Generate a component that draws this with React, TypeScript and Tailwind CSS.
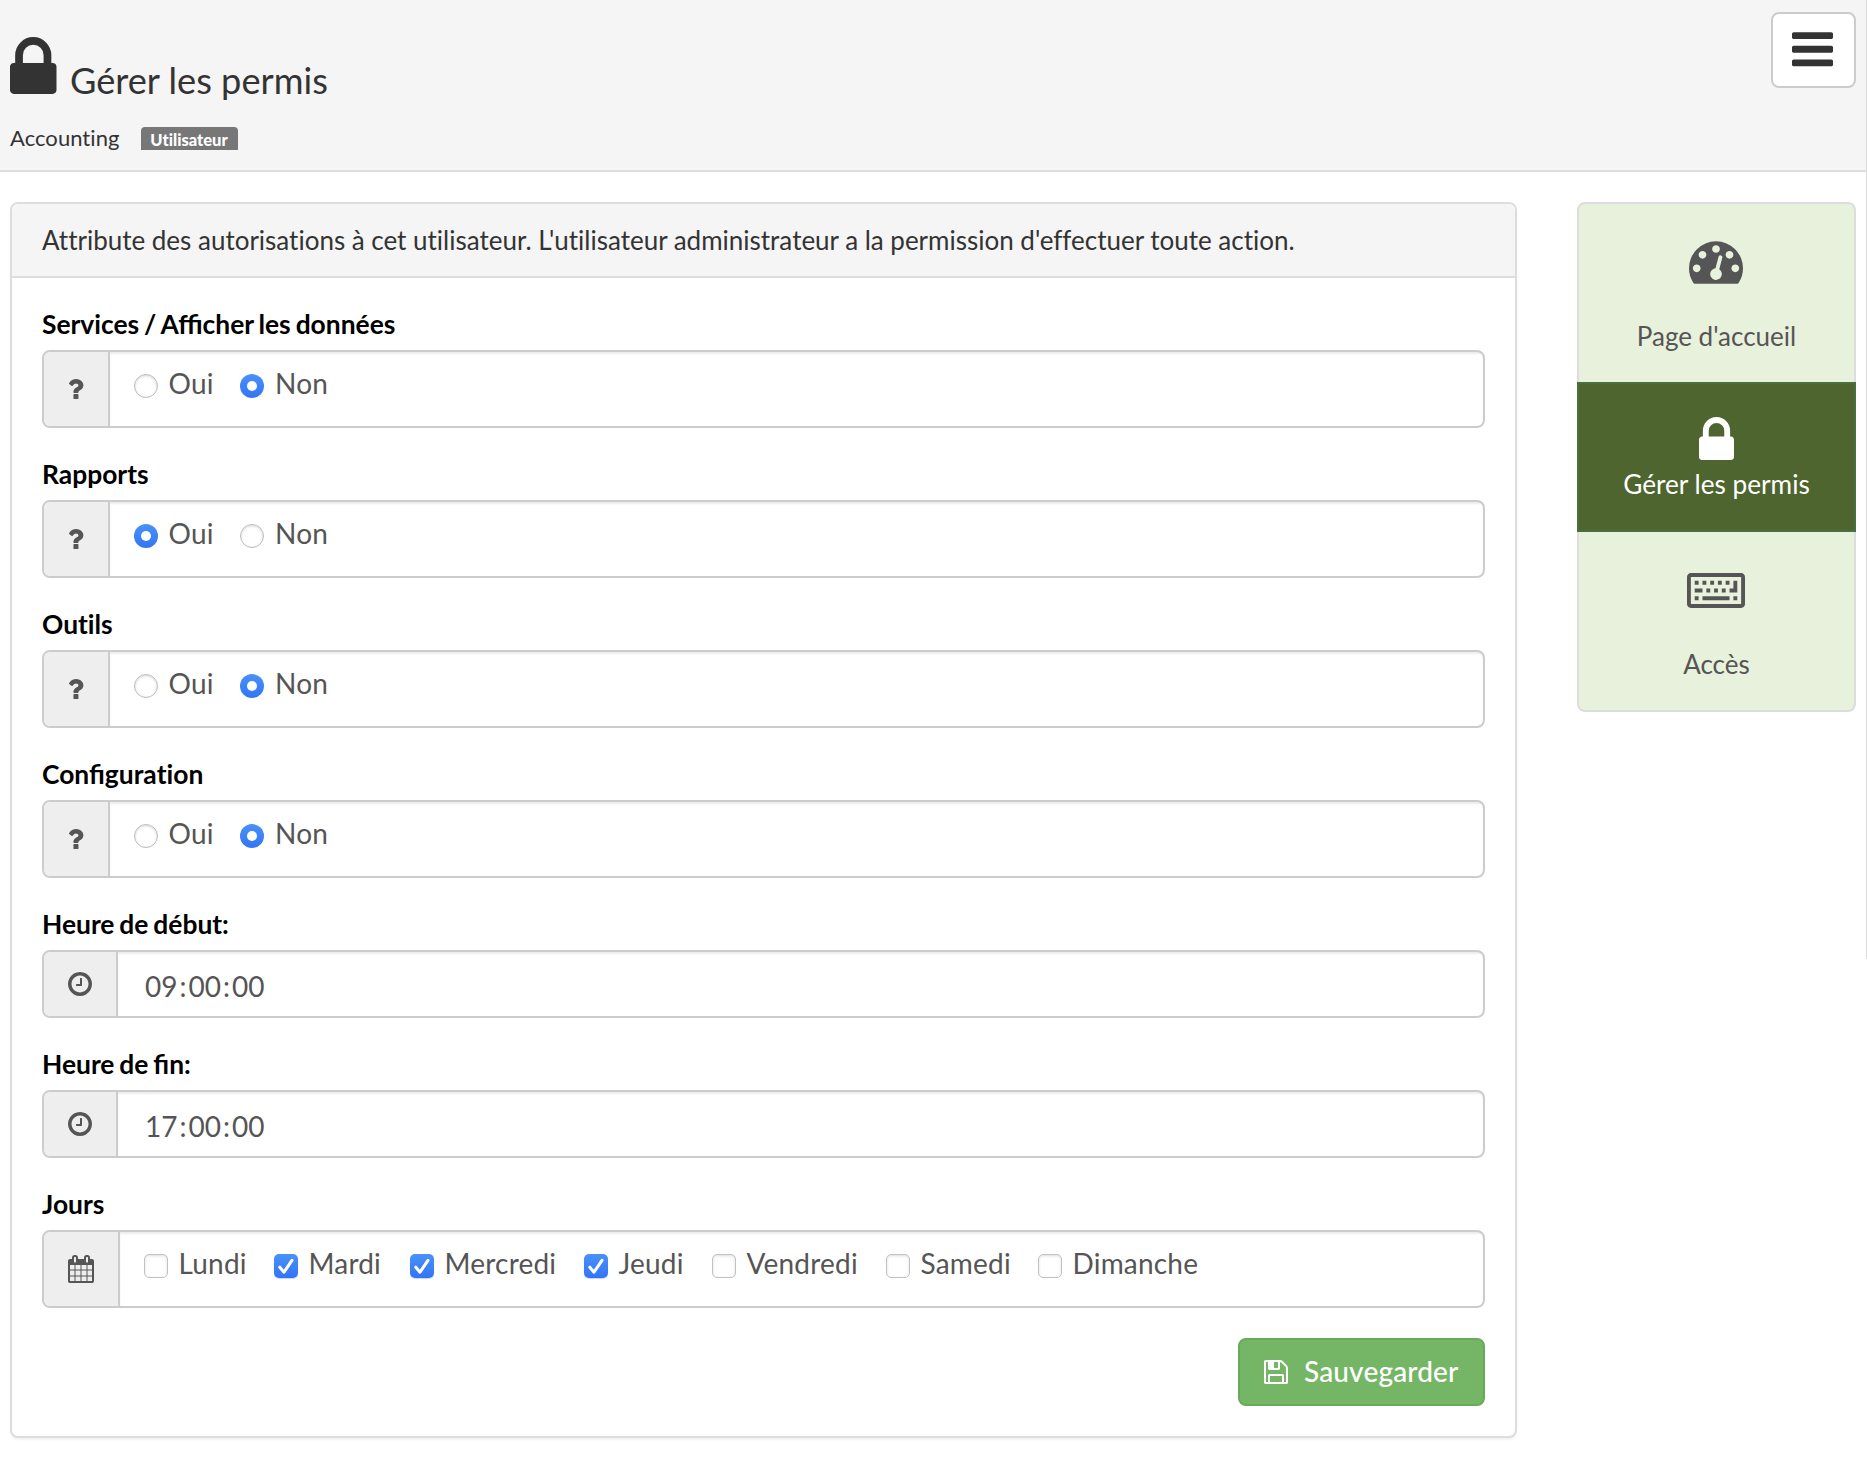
import type { ReactNode } from "react";

const LOCK =
  "M640 768h512v-192q0-106-75-181t-181-75-181 75-75 181v192zm832 96v576q0 40-28 68t-68 28h-960q-40 0-68-28t-28-68v-576q0-40 28-68t68-28h32v-192q0-184 132-316t316-132 316 132 132 316v192h32q40 0 68 28t28 68z";
const BARS =
  "M1664 1344v128q0 26-19 45t-45 19h-1408q-26 0-45-19t-19-45v-128q0-26 19-45t45-19h1408q26 0 45 19t19 45zm0-512v128q0 26-19 45t-45 19h-1408q-26 0-45-19t-19-45v-128q0-26 19-45t45-19h1408q26 0 45 19t19 45zm0-512v128q0 26-19 45t-45 19h-1408q-26 0-45-19t-19-45v-128q0-26 19-45t45-19h1408q26 0 45 19t19 45z";
const QUESTION =
  "M1088 1256v240q0 16-12 28t-28 12h-240q-16 0-28-12t-12-28v-240q0-16 12-28t28-12h240q16 0 28 12t12 28zm316-600q0 54-15.5 101t-35 76.5-55 59.5-57.5 43.5-61 35.5q-41 23-68.5 65t-27.5 67q0 17-12 32.5t-28 15.5h-240q-15 0-25.5-18.5t-10.5-37.5v-45q0-83 65-156.5t143-108.5q59-27 84-56t25-76q0-42-46.5-74t-107.5-32q-65 0-108 29-35 25-107 115-13 16-31 16-12 0-25-8l-164-125q-13-10-15.5-25t5.5-28q160-266 464-266 80 0 161 31t146 83 106 127.5 41 158.5z";
const CLOCK =
  "M1024 544v448q0 14-9 23t-23 9h-320q-14 0-23-9t-9-23v-64q0-14 9-23t23-9h224v-352q0-14 9-23t23-9h64q14 0 23 9t9 23zm416 352q0-148-73-273t-198-198-273-73-273 73-198 198-73 273 73 273 198 198 273 73 273-73 198-198 73-273zm224 0q0 209-103 385.5t-279.5 279.5-385.5 103-385.5-103-279.5-279.5-103-385.5 103-385.5 279.5-279.5 385.5-103 385.5 103 279.5 279.5 103 385.5z";
const CALENDAR =
  "M192 1664h288v-288h-288v288zm352 0h320v-288h-320v288zm-352-352h288v-320h-288v320zm352 0h320v-320h-320v320zm-352-384h288v-288h-288v288zm736 736h320v-288h-320v288zm-384-736h320v-288h-320v288zm768 736h288v-288h-288v288zm-384-352h320v-320h-320v320zm-352-864v-288q0-13-9.5-22.5t-22.5-9.5h-64q-13 0-22.5 9.5t-9.5 22.5v288q0 13 9.5 22.5t22.5 9.5h64q13 0 22.5-9.5t9.5-22.5zm736 864h288v-320h-288v320zm-384-384h320v-288h-320v288zm384 0h288v-288h-288v288zm32-480v-288q0-13-9.5-22.5t-22.5-9.5h-64q-13 0-22.5 9.5t-9.5 22.5v288q0 13 9.5 22.5t22.5 9.5h64q13 0 22.5-9.5t9.5-22.5zm384-64v1280q0 52-38 90t-90 38h-1408q-52 0-90-38t-38-90v-1280q0-52 38-90t90-38h128v-96q0-66 47-113t113-47h64q66 0 113 47t47 113v96h384v-96q0-66 47-113t113-47h64q66 0 113 47t47 113v96h128q52 0 90 38t38 90z";
const FLOPPY =
  "M512 1536h768v-384h-768v384zm896 0h128v-896q0-14-10-38.5t-20-34.5l-281-281q-10-10-34-20t-39-10v416q0 40-28 68t-68 28h-576q-40 0-68-28t-28-68v-416h-128v1280h128v-416q0-40 28-68t68-28h832q40 0 68 28t28 68v416zm-384-928v-320q0-13-9.5-22.5t-22.5-9.5h-192q-13 0-22.5 9.5t-9.5 22.5v320q0 13 9.5 22.5t22.5 9.5h192q13 0 22.5-9.5t9.5-22.5zm640 32v928q0 40-28 68t-68 28h-1344q-40 0-68-28t-28-68v-1344q0-40 28-68t68-28h928q40 0 88 20t76 48l280 280q28 28 48 76t20 88z";
const DOT = "q0-53-37.5-90.5t-90.5-37.5-90.5 37.5-37.5 90.5 37.5 90.5 90.5 37.5 90.5-37.5 37.5-90.5z";
const DASHBOARD = `M384 1152${DOT}m192-448${DOT}m428 481l101-382q6-26-7.5-48.5t-38.5-29.5-48 6.5-30 39.5l-101 382q-60 5-107 43.5t-63 98.5q-20 77 20 146t117 89 146-20 89-117q16-60-6-117t-72-91zm660-33${DOT}m-640-640${DOT}m448 192${DOT}m320 448q0 261-141 483-19 29-54 29h-1402q-35 0-54-29-141-221-141-483 0-182 71-348t191-286 286-191 348-71 348 71 286 191 191 286 71 348z`;
const KEYBOARD =
  "M128 0h1664q53 0 90.500 37.500t37.500 90.500v896q0 53-37.500 90.500t-90.500 37.500h-1664q-53 0-90.500-37.500t-37.500-90.500v-896q0-53 37.500-90.500t90.500-37.500zM128 128v896h1664v-896zM256 256h128v128h-128zM512 256h128v128h-128zM768 256h128v128h-128zM1024 256h128v128h-128zM1280 256h128v128h-128zM1536 256h128v384h-256v-128h128zM256 512h256v128h-256zM640 512h128v128h-128zM896 512h128v128h-128zM1152 512h128v128h-128zM256 768h128v128h-128zM512 768h896v128h-896zM1536 768h128v128h-128z";

const Icon = ({ d, box, className }: { d: string; box: string; className: string }) => (
  <svg viewBox={box} className={`shrink-0 fill-current ${className}`} aria-hidden="true">
    <path d={d} fillRule="evenodd" />
  </svg>
);

const Radio = ({ checked }: { checked: boolean }) =>
  checked ? (
    <span className="flex size-6 shrink-0 items-center justify-center rounded-full bg-linear-to-b from-[#4b91f8] to-[#3275f4]">
      <span className="size-[10px] rounded-full bg-white" />
    </span>
  ) : (
    <span className="size-6 shrink-0 rounded-full border border-[#bcbcbc] bg-white shadow-[inset_0_1px_3px_rgba(0,0,0,0.16)]" />
  );

const Checkbox = ({ checked }: { checked: boolean }) =>
  checked ? (
    <span className="flex size-6 shrink-0 items-center justify-center rounded-[5px] bg-linear-to-b from-[#4b91f8] to-[#3275f4] shadow-[0_1px_1px_rgba(50,117,244,0.3)]">
      <svg viewBox="0 0 24 24" className="size-6" fill="none" stroke="white" strokeWidth="3" strokeLinecap="round" strokeLinejoin="round">
        <path d="M5.800 13.200L10 18.200L18 6.300" />
      </svg>
    </span>
  ) : (
    <span className="size-6 shrink-0 rounded-[5px] border border-[#c2c2c2] bg-white shadow-[inset_0_1px_3px_rgba(0,0,0,0.14)]" />
  );

const Label = ({ children }: { children: ReactNode }) => (
  <p className="h-10 text-[26.4px] leading-7 font-bold text-black [word-spacing:-1.5px]">{children}</p>
);

const Group = ({ addon, addonClass, children }: { addon: ReactNode; addonClass: string; children: ReactNode }) => (
  <div className="flex overflow-hidden rounded-lg border-2 border-[#ccc]">
    <div className={`flex shrink-0 justify-center border-r-2 border-[#ccc] bg-[#eee] ${addonClass}`}>{addon}</div>
    <div className="flex grow shadow-[inset_0_2px_2px_rgba(0,0,0,0.075)]">{children}</div>
  </div>
);

const permissions: { key: string; label: ReactNode; value: boolean }[] = [
  { key: "services", label: "Services / Afficher les données", value: false },
  { key: "rapports", label: "Rapports", value: true },
  { key: "outils", label: <span className="[font-variant-ligatures:none]">Outils</span>, value: false },
  {
    key: "configuration",
    label: (
      <>
        Configura<span className="[font-variant-ligatures:none]">tion</span>
      </>
    ),
    value: false,
  },
];

const times = [
  { label: "Heure de début:", value: ["09", "00", "00"] },
  { label: "Heure de fin:", value: ["17", "00", "00"] },
];

const days = [
  { label: "Lundi", checked: false, width: "w-[130px]" },
  { label: "Mardi", checked: true, width: "w-[136px]" },
  { label: "Mercredi", checked: true, width: "w-[174px]" },
  { label: "Jeudi", checked: true, width: "w-32" },
  { label: "Vendredi", checked: false, width: "w-[174px]" },
  { label: "Samedi", checked: false, width: "w-[152px]" },
  { label: "Dimanche", checked: false, width: "w-[180px]" },
];

const Header = () => (
  <header className="flex h-[172px] justify-between border-b-2 border-[#ddd] bg-[#f5f5f5] pl-[10px] pr-[10px]">
    <div className="pt-[37px]">
      <div className="flex h-[57px] items-start">
        <Icon d={LOCK} box="320 128 1152 1408" className="h-[57px] w-[46.5px]" />
        <h1 className="ml-[13.500px] pt-[21px] text-[36.2px] leading-[44px]">Gérer les permis</h1>
      </div>
      <div className="mt-[30px] flex h-[26px] items-start [font-variant-ligatures:none]">
        <span className="pt-px text-[22px] leading-[26px] tracking-[0.05px]">Accounting</span>
        <span className="mt-[3px] ml-[22px] h-[23px] w-[97px] rounded-t-[4px] bg-[#777] pr-0.5 text-center text-[16.5px] leading-[27px] font-black text-white">
          Utilisateur
        </span>
      </div>
    </div>
    <button className="mt-3 flex h-[76px] w-[85px] items-start justify-center rounded-lg border-2 border-[#ccc] bg-white pt-[18px] pr-0.5">
      <Icon d={BARS} box="128 256 1536 1280" className="h-[34.5px] w-[41px]" />
    </button>
  </header>
);

const Sidebar = () => (
  <nav className="flex h-[510px] w-[279px] flex-col text-center text-[26px] leading-8 text-[#555]">
    <a className="flex h-[180px] flex-col items-center rounded-t-lg border-2 border-b-0 border-[#ddd] bg-[#e8f1db] pt-[37px]">
      <Icon d={DASHBOARD} box="0 256 1792 1408" className="mr-px h-[43px] w-[54px]" />
      <span className="mt-9">Page d'accueil</span>
    </a>
    <a className="flex h-[150px] flex-col items-center border-2 border-[#48703f] bg-[#4e652f] pt-[33px] text-white">
      <Icon d={LOCK} box="320 128 1152 1408" className="h-[43px] w-[35px]" />
      <span className="mt-2 text-[26.2px]">Gérer les permis</span>
    </a>
    <a className="flex h-[180px] flex-col items-center rounded-b-lg border-2 border-t-0 border-[#ddd] bg-[#e8f1db] pt-[41px]">
      <Icon d={KEYBOARD} box="0 0 1920 1152" className="mr-px h-[35px] w-[58px]" />
      <span className="mt-10">Accès</span>
    </a>
  </nav>
);

const PermissionsForm = () => (
  <section className="h-[1236px] w-[1507px] rounded-lg border-2 border-[#ddd] bg-white shadow-[0_2px_2px_rgba(0,0,0,0.05)]">
    <div className="h-[74px] rounded-t-md border-b-2 border-[#ddd] bg-[#f5f5f5] px-[30px] pt-5 text-[26px] leading-8 text-[#333] [font-variant-ligatures:none] [word-spacing:-0.05px]">
      Attribute des autorisations à cet utilisateur. L'utilisateur administrateur a la permission d'effectuer toute action.
    </div>
    <form className="px-[30px] pt-8">
      {permissions.map(({ key, label, value }) => (
        <div key={key} className="h-[150px]">
          <Label>{label}</Label>
          <Group
            addonClass="w-[66px] items-start pt-[27px] pl-px text-[#555]"
            addon={<Icon d={QUESTION} box="484 256 920 1280" className="h-5 w-[14.4px]" />}
          >
            <div className="flex h-[74px] items-start pt-[22px] pl-6 text-[28px] leading-6 tracking-[0.2px] text-[#555]">
              <span className="flex w-[106px] gap-[10.5px]">
                <Radio checked={value} />
                <span className="-mt-[3px]">Oui</span>
              </span>
              <span className="flex gap-[11px]">
                <Radio checked={!value} />
                <span className="-mt-[3px]">Non</span>
              </span>
            </div>
          </Group>
        </div>
      ))}
      {times.map(({ label, value }) => (
        <div key={label} className="h-[140px]">
          <Label>{label}</Label>
          <Group
            addonClass="w-[74px] items-start pt-5 text-[#555]"
            addon={<Icon d={CLOCK} box="128 128 1536 1536" className="size-6" />}
          >
            <div className="h-16 pt-[18px] pl-[27px] text-[28px] leading-8 text-[#555]">
              {value[0]}
              <span className="mx-[2px]">:</span>
              {value[1]}
              <span className="mx-[2px]">:</span>
              {value[2]}
            </div>
          </Group>
        </div>
      ))}
      <div className="h-[148px]">
        <Label>Jours</Label>
        <Group
          addonClass="w-[76px] items-start pt-[23px] text-[#555]"
          addon={<Icon d={CALENDAR} box="64 0 1664 1792" className="h-7 w-[26px]" />}
        >
          <div className="flex h-[74px] items-start pt-[22px] pl-6 text-[28px] leading-6 tracking-[0.2px] text-[#555]">
            {days.map(({ label, checked, width }) => (
              <span key={label} className={`flex gap-[10.5px] ${width}`}>
                <Checkbox checked={checked} />
                <span className="-mt-[3px]">{label}</span>
              </span>
            ))}
          </div>
        </Group>
      </div>
      <div className="flex justify-end">
        <button className="flex h-[68px] w-[247px] items-start rounded-lg border-2 border-[#67ab58] bg-[#75b666] pt-[16px] pl-6 text-[28px] leading-8 tracking-[0.15px] text-white">
          <Icon d={FLOPPY} box="128 128 1536 1536" className="mt-1 size-6" />
          <span className="-mt-px ml-4 font-medium">Sauvegarder</span>
        </button>
      </div>
    </form>
  </section>
);

export default function App() {
  return (
    <div className="flex min-h-[1470px] w-[1867px] bg-white font-['Lato',sans-serif] text-[#333]">
      <div className="w-[1866px] shrink-0">
        <Header />
        <main className="flex items-start justify-between px-[10px] pt-[30px]">
          <PermissionsForm />
          <Sidebar />
        </main>
      </div>
      <div className="h-[959px] w-px bg-[#ddd]" />
    </div>
  );
}
